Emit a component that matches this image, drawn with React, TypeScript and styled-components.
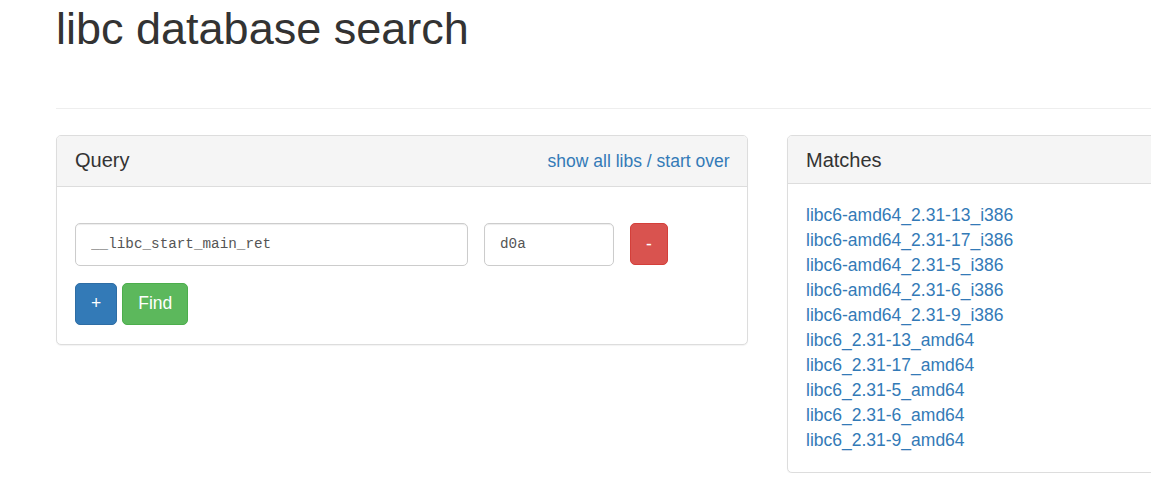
import React from "react";
import styled, { createGlobalStyle } from "styled-components";

const Global = createGlobalStyle`
  html, body { margin: 0; padding: 0; background: #fff; }
  body {
    overflow: hidden;
    font-family: "Liberation Sans", Arial, Helvetica, sans-serif;
    font-size: 17.5px;
    line-height: 25px;
    color: #333;
  }
  * { box-sizing: border-box; }
`;

const Page = styled.div`
  width: 1560px;
  padding: 4px 0 0 56px;
`;

const Title = styled.h1`
  margin: 0;
  font-size: 45px;
  line-height: 1.1;
  font-weight: 500;
  color: #333;
`;

const Rule = styled.div`
  margin-top: 54px;
  border-top: 1px solid #eee;
`;

const Columns = styled.div`
  display: grid;
  grid-template-columns: 692px 692px;
  column-gap: 39px;
  align-items: start;
  margin-top: 26.5px;
`;

const Panel = styled.div`
  border: 1px solid #ddd;
  border-radius: 5px;
  background: #fff;
  box-shadow: 0 1px 1px rgba(0, 0, 0, 0.05);
`;

const PanelHeading = styled.div`
  display: flex;
  justify-content: space-between;
  align-items: flex-start;
  padding: 12.5px 17.5px 12.5px 18px;
  background: #f5f5f5;
  border-bottom: 1px solid #ddd;
  border-radius: 4px 4px 0 0;
`;

const PanelTitle = styled.h3`
  margin: 0;
  font-size: 20px;
  line-height: 1.1;
  font-weight: 500;
  color: #333;
`;

const HeaderLinks = styled.div`
  font-size: 17.5px;
  line-height: 25px;
  color: #337ab7;
`;

const Link = styled.a`
  color: #337ab7;
  text-decoration: none;
  cursor: pointer;
`;

const PanelBody = styled.div<{ $top?: number; $bottom?: number }>`
  padding: ${(p) => p.$top ?? 18.75}px 18px ${(p) => p.$bottom ?? 18.75}px;
`;

const FormRow = styled.div`
  display: flex;
  gap: 16px;
  align-items: center;
`;

const ButtonRow = styled.div`
  display: flex;
  gap: 5px;
  margin-top: 17px;
`;

const Input = styled.input<{ $w: number }>`
  width: ${(p) => p.$w}px;
  height: 43px;
  padding: 0 15px;
  font-family: "Liberation Mono", "DejaVu Sans Mono", monospace;
  font-size: 14.3px;
  line-height: 25px;
  color: #555;
  border: 1px solid #ccc;
  border-radius: 5px;
  box-shadow: inset 0 1px 1px rgba(0, 0, 0, 0.075);
  outline: none;
  background: #fff;
`;

const variants = {
  danger: { bg: "#d9534f", border: "#d43f3a" },
  primary: { bg: "#337ab7", border: "#2e6da4" },
  success: { bg: "#5cb85c", border: "#4cae4c" },
};

const Button = styled.button<{ $v: keyof typeof variants }>`
  height: 42.5px;
  padding: 7.5px 15px;
  font-family: "Liberation Sans", Arial, sans-serif;
  font-size: 17.5px;
  line-height: 25px;
  color: #fff;
  background: ${(p) => variants[p.$v].bg};
  border: 1px solid ${(p) => variants[p.$v].border};
  border-radius: 5px;
  cursor: pointer;
`;

const MatchList = styled.div`
  display: flex;
  flex-direction: column;
  font-size: 17.5px;
  line-height: 25px;
`;

const matches = [
  "libc6-amd64_2.31-13_i386",
  "libc6-amd64_2.31-17_i386",
  "libc6-amd64_2.31-5_i386",
  "libc6-amd64_2.31-6_i386",
  "libc6-amd64_2.31-9_i386",
  "libc6_2.31-13_amd64",
  "libc6_2.31-17_amd64",
  "libc6_2.31-5_amd64",
  "libc6_2.31-6_amd64",
  "libc6_2.31-9_amd64",
];

export default function App() {
  return (
    <Page>
      <Global />
      <Title>libc database search</Title>
      <Rule />
      <Columns>
        <Panel>
          <PanelHeading>
            <PanelTitle>Query</PanelTitle>
            <HeaderLinks>
              <Link>show all libs</Link> / <Link>start over</Link>
            </HeaderLinks>
          </PanelHeading>
          <PanelBody $top={35.5} $bottom={19}>
            <FormRow>
              <Input $w={393} defaultValue="__libc_start_main_ret" />
              <Input $w={130} defaultValue="d0a" />
              <Button $v="danger">-</Button>
            </FormRow>
            <ButtonRow>
              <Button $v="primary">+</Button>
              <Button $v="success">Find</Button>
            </ButtonRow>
          </PanelBody>
        </Panel>
        <Panel>
          <PanelHeading>
            <PanelTitle>Matches</PanelTitle>
          </PanelHeading>
          <PanelBody>
            <MatchList>
              {matches.map((m) => (
                <Link key={m}>{m}</Link>
              ))}
            </MatchList>
          </PanelBody>
        </Panel>
      </Columns>
    </Page>
  );
}
